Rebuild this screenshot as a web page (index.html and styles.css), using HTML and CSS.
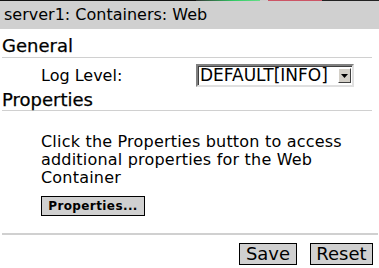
FILE: index.html
```html
<!DOCTYPE html>
<html>
<head>
<meta charset="utf-8">
<link rel="stylesheet" href="styles.css">
</head>
<body>
<div class="strip"><span class="s-black"></span><span class="s-green"></span><span class="s-gap"></span><span class="s-pink"></span><span class="s-rest"></span></div>
<div class="title">server1: Containers: Web</div>
<div class="section">
  <div class="heading first">General</div>
  <div class="rule"></div>
  <div class="field">
    <span class="label">Log Level:</span>
    <div class="select"><span class="value">DEFAULT[INFO]</span><span class="arrow"><svg width="7" height="4" viewBox="0 0 7 4"><path d="M0 0H7L3.5 4Z" fill="#000"/></svg></span></div>
  </div>
  <div class="heading">Properties</div>
  <div class="rule"></div>
  <p class="desc">Click the Properties button to access additional properties for the Web Container</p>
  <div class="btnrow"><span class="btn small">Properties...</span></div>
  <div class="rule thick"></div>
  <div class="actions"><span class="btn save">Save</span><span class="btn reset">Reset</span></div>
</div>
</body>
</html>
```
FILE: styles.css
```css
html, body { margin: 0; padding: 0; background: #fff; }
body { font-family: "DejaVu Sans", Verdana, sans-serif; font-size: 16px; color: #000; width: 379px; height: 268px; overflow: hidden; }
.strip { display: flex; height: 1px; }
.strip span { display: block; height: 1px; }
.s-black { width: 196px; background: #111; }
.s-green { width: 64px; background: linear-gradient(90deg, #333, #3c6 60%, #6d8); }
.s-gap { width: 8px; background: #ccc; }
.s-pink { width: 54px; background: #c56; }
.s-rest { flex: 1; background: #222; }
.title { height: 28px; line-height: 28px; background: #d0d0d0; padding-left: 4px; }
.section { padding: 0 7px 0 2px; }
.heading { font-size: 18px; line-height: 21px; height: 21px; -webkit-text-stroke: 0.25px #000; }
.heading.first { padding-top: 6px; height: 22px; }
.rule { height: 1px; background: #d0d0d0; }
.rule.thick { height: 2px; margin-right: -6px; }
.field { display: flex; align-items: flex-start; height: 31px; padding-left: 39px; }
.label { width: 155px; padding-top: 9px; line-height: 18px; }
.select { display: flex; align-items: center; margin-top: 6px; width: 154px; height: 19px; border: 2px solid; border-color: #808080 #e0e0e0 #e0e0e0 #808080; box-shadow: inset 1px 1px 0 #404040; background: #fff; font-size: 17px; }
.value { flex: 1; padding-left: 2px; line-height: 19px; }
.arrow { display: flex; align-items: center; justify-content: center; width: 13px; height: 15px; margin-right: 1px; background: #d4d0c8; border: 1px solid; border-color: #fff #404040 #404040 #fff; box-sizing: border-box; }
.desc { margin: 0; padding: 22px 0 0 39px; line-height: 18px; letter-spacing: 0.2px; }
.btnrow { padding: 8px 0 0 39px; height: 46px; box-sizing: border-box; }
.btn { display: inline-block; background: #d0d0d0; border: 1px solid #000; box-sizing: border-box; text-align: center; }
.btn.small { font-size: 12px; font-weight: bold; width: 104px; height: 20px; line-height: 18px; letter-spacing: 0.4px; }
.actions { display: flex; justify-content: flex-end; gap: 13px; padding-top: 8px; margin-right: -1px; }
.actions .btn { height: 22px; line-height: 20px; font-size: 18px; }
.btn.save { width: 58px; }
.btn.reset { width: 63px; }
```
